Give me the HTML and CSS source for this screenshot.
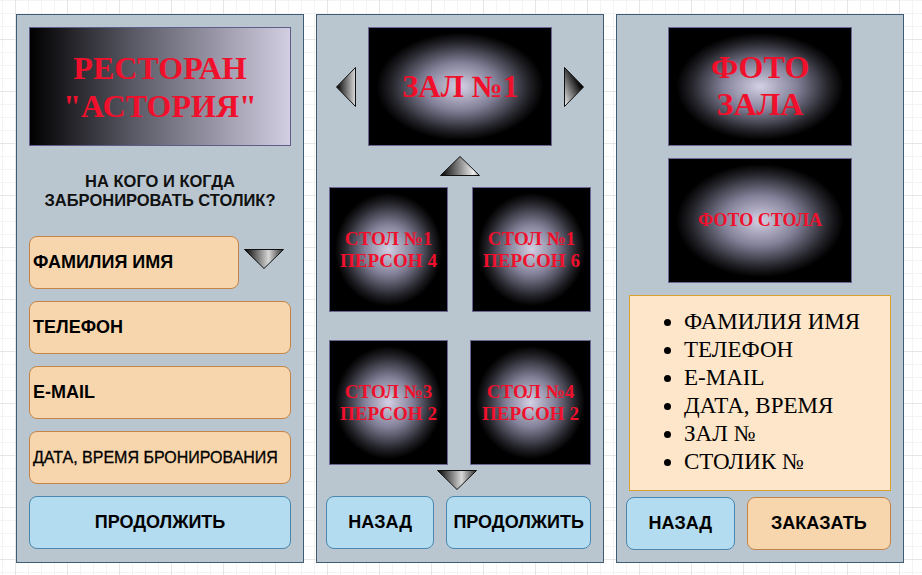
FILE: index.html
```html
<!DOCTYPE html>
<html lang="ru">
<head>
    <meta charset="UTF-8">
    <meta name="viewport" content="width=device-width, initial-scale=1.0">
    <title>Ресторан Астория - бронирование</title>
    <link rel="stylesheet" href="styles.css">
</head>
<body>

<div class="screens">

    <!-- Screen 1: contact form -->
    <div class="panel">
        <div class="banner">РЕСТОРАН<br>"АСТОРИЯ"</div>

        <div class="question">НА КОГО И КОГДА<br>ЗАБРОНИРОВАТЬ СТОЛИК?</div>

        <div class="fields">
            <div class="field-row">
                <div class="field field-name">ФАМИЛИЯ ИМЯ</div>
                <svg class="tri tri-down" width="40" height="20" viewBox="0 0 40 20">
                    <defs>
                        <linearGradient id="g-down1" x1="0" y1="0" x2="1" y2="0">
                            <stop offset="0" stop-color="#000"/>
                            <stop offset="0.62" stop-color="#d8d8d8"/>
                            <stop offset="1" stop-color="#2a2a2a"/>
                        </linearGradient>
                    </defs>
                    <polygon points="0.5,0.5 39.5,0.5 20,19.5" fill="url(#g-down1)" stroke="#111" stroke-width="1"/>
                </svg>
            </div>
            <div class="field">ТЕЛЕФОН</div>
            <div class="field">E-MAIL</div>
            <div class="field field-thin">ДАТА, ВРЕМЯ БРОНИРОВАНИЯ</div>
            <button class="btn btn-blue">ПРОДОЛЖИТЬ</button>
        </div>
    </div>

    <!-- Screen 2: hall and table choice -->
    <div class="panel">
        <div class="hall-row">
            <svg class="tri" width="20" height="40" viewBox="0 0 20 40">
                <defs>
                    <linearGradient id="g-left" x1="0" y1="0" x2="1" y2="0">
                        <stop offset="0" stop-color="#000"/>
                        <stop offset="1" stop-color="#dcdcdc"/>
                    </linearGradient>
                </defs>
                <polygon points="0.5,20 19.5,0.5 19.5,39.5" fill="url(#g-left)" stroke="#111" stroke-width="1"/>
            </svg>
            <div class="photo photo-hall">ЗАЛ №1</div>
            <svg class="tri" width="20" height="40" viewBox="0 0 20 40">
                <defs>
                    <linearGradient id="g-right" x1="0" y1="1" x2="1" y2="0">
                        <stop offset="0" stop-color="#f4f4f4"/>
                        <stop offset="0.7" stop-color="#000"/>
                    </linearGradient>
                </defs>
                <polygon points="0.5,0.5 19.5,20 0.5,39.5" fill="url(#g-right)" stroke="#111" stroke-width="1"/>
            </svg>
        </div>

        <svg class="tri tri-up" width="40" height="20" viewBox="0 0 40 20">
            <defs>
                <linearGradient id="g-up" x1="0" y1="0" x2="1" y2="0">
                    <stop offset="0" stop-color="#000"/>
                    <stop offset="0.85" stop-color="#eeeeee"/>
                    <stop offset="1" stop-color="#888"/>
                </linearGradient>
            </defs>
            <polygon points="20,0.5 39.5,19.5 0.5,19.5" fill="url(#g-up)" stroke="#111" stroke-width="1"/>
        </svg>

        <div class="tables">
            <div class="photo photo-table">СТОЛ №1<br>ПЕРСОН 4</div>
            <div class="photo photo-table">СТОЛ №1<br>ПЕРСОН 6</div>
            <div class="photo photo-table">СТОЛ №3<br>ПЕРСОН 2</div>
            <div class="photo photo-table shift">СТОЛ №4<br>ПЕРСОН 2</div>
        </div>

        <svg class="tri tri-down2" width="40" height="20" viewBox="0 0 40 20">
            <defs>
                <linearGradient id="g-down2" x1="0" y1="0" x2="1" y2="0">
                    <stop offset="0" stop-color="#000"/>
                    <stop offset="0.62" stop-color="#d8d8d8"/>
                    <stop offset="1" stop-color="#2a2a2a"/>
                </linearGradient>
            </defs>
            <polygon points="0.5,0.5 39.5,0.5 20,19.5" fill="url(#g-down2)" stroke="#111" stroke-width="1"/>
        </svg>

        <div class="actions">
            <button class="btn btn-blue btn-back">НАЗАД</button>
            <button class="btn btn-blue btn-next">ПРОДОЛЖИТЬ</button>
        </div>
    </div>

    <!-- Screen 3: summary -->
    <div class="panel">
        <div class="photo photo-hall photo-center">ФОТО<br>ЗАЛА</div>
        <div class="photo photo-small photo-center">ФОТО СТОЛА</div>

        <div class="summary">
            <ul>
                <li>ФАМИЛИЯ ИМЯ</li>
                <li>ТЕЛЕФОН</li>
                <li>E-MAIL</li>
                <li>ДАТА, ВРЕМЯ</li>
                <li>ЗАЛ №</li>
                <li>СТОЛИК №</li>
            </ul>
        </div>

        <div class="actions">
            <button class="btn btn-blue btn-back">НАЗАД</button>
            <button class="btn btn-orange btn-next">ЗАКАЗАТЬ</button>
        </div>
    </div>

</div>

</body>
</html>
```

FILE: styles.css
```css
* {
    box-sizing: border-box;
}

body {
    margin: 0;
    font-family: 'Liberation Sans', Arial, sans-serif;
    background-color: #ffffff;
    /* drawing-board grid */
    background-image:
        linear-gradient(#e6e6e6 1px, transparent 1px),
        linear-gradient(90deg, #e6e6e6 1px, transparent 1px),
        linear-gradient(#f3f3f3 1px, transparent 1px),
        linear-gradient(90deg, #f3f3f3 1px, transparent 1px);
    background-size: 52px 52px, 52px 52px, 13px 13px, 13px 13px;
    background-position: 0 39px, 15px 0, 0 0, 2px 0;
    height: 100vh;
}

.screens {
    display: flex;
    gap: 12px;
    padding: 14px 0 0 16px;
}

.panel {
    width: 288px;
    height: 549px;
    background-color: #b9c6d0;
    border: 1px solid #3f5c74;
    padding: 12px;
    display: flex;
    flex-direction: column;
}

/* ---------- screen 1 ---------- */

.banner {
    height: 119px;
    border: 1px solid #5e5c88;
    background: linear-gradient(90deg, #000000 0%, #5a5a66 40%, #d2cee2 100%);
    color: #f0102c;
    font-family: 'Liberation Serif', 'Times New Roman', serif;
    font-weight: bold;
    font-size: 32px;
    line-height: 38px;
    text-align: center;
    display: flex;
    align-items: center;
    justify-content: center;
}

.question {
    margin: 26px 0;
    font-size: 16.5px;
    font-weight: bold;
    line-height: 19px;
    text-align: center;
    color: #111;
}

.fields {
    display: flex;
    flex-direction: column;
    gap: 12px;
}

.field-row {
    display: flex;
    align-items: center;
    gap: 5px;
}

.field {
    height: 53px;
    background-color: #f8d6ad;
    border: 1px solid #c48448;
    border-radius: 8px;
    padding-left: 3px;
    display: flex;
    align-items: center;
    font-size: 18px;
    font-weight: bold;
    color: #000;
}

.field-name {
    width: 210px;
}

.field-thin {
    font-size: 16px;
    font-weight: normal;
    -webkit-text-stroke: 0.3px #000;
}

.tri {
    display: block;
    flex-shrink: 0;
}

.tri-down {
    margin-bottom: 8px;
}

/* ---------- buttons ---------- */

.btn {
    height: 53px;
    border-radius: 8px;
    font-family: 'Liberation Sans', Arial, sans-serif;
    font-size: 18px;
    font-weight: bold;
    color: #000;
    cursor: pointer;
}

.btn-blue {
    background-color: #b3dcf0;
    border: 1px solid #4a86ae;
}

.btn-orange {
    background-color: #f8d6ad;
    border: 1px solid #c48448;
}

.actions {
    display: flex;
    gap: 12px;
    margin-left: -3px;
}

.btn-back {
    width: 109px;
}

.btn-next {
    width: 145px;
}

/* ---------- photos ---------- */

.photo {
    border: 1px solid #6a6892;
    background: radial-gradient(ellipse closest-side, #d4d0e4 0%, #84829a 40%, #222228 76%, #000 92%);
    color: #f0102c;
    font-family: 'Liberation Serif', 'Times New Roman', serif;
    font-weight: bold;
    text-align: center;
    display: flex;
    align-items: center;
    justify-content: center;
}

.photo-hall {
    width: 184px;
    height: 119px;
    font-size: 32px;
    line-height: 37px;
}

.photo-center {
    align-self: center;
}

.photo-small {
    width: 184px;
    height: 126px;
    margin-top: 12px;
    font-size: 18px;
}

/* ---------- screen 2 ---------- */

.hall-row {
    display: flex;
    align-items: center;
    justify-content: center;
    gap: 12px;
}

.hall-row .photo-hall {
    font-size: 31px;
}

.tri-up {
    align-self: center;
    margin-top: 10px;
}

.tables {
    display: grid;
    grid-template-columns: 119px 119px;
    column-gap: 24px;
    row-gap: 28px;
    margin-top: 11px;
}

.photo-table {
    height: 125px;
    font-size: 19px;
    line-height: 22px;
}

.photo-table.shift {
    margin-left: -2px;
}

.tri-down2 {
    align-self: center;
    margin: 5px 6px 6px 0;
}

/* ---------- screen 3 ---------- */

.summary {
    height: 196px;
    margin: 12px 0 6px;
    background-color: #fde6c9;
    border: 1px solid #d9a032;
    padding: 12px 0;
}

.summary ul {
    margin: 0;
    padding-left: 54px;
    font-family: 'Liberation Serif', 'Times New Roman', serif;
    font-size: 23px;
    line-height: 28px;
    color: #000;
}
```
